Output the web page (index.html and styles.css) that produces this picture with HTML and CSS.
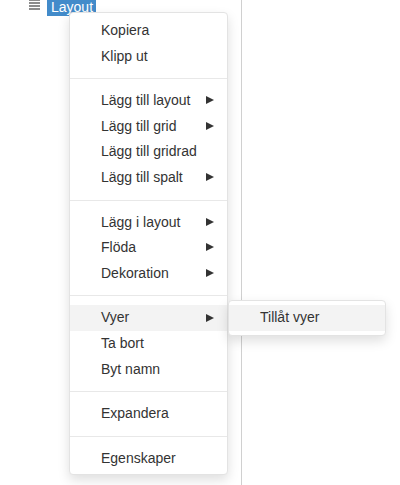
FILE: index.html
```html
<!DOCTYPE html>
<html>
<head>
<meta charset="utf-8">
<link rel="stylesheet" href="styles.css">
</head>
<body>
<div class="page">
  <div class="tree-panel">
    <div class="tree-row">
      <svg class="tree-icon" width="11" height="12" viewBox="0 0 11 12">
        <rect x="0" y="0" width="11" height="2" fill="#8c8c8c"/>
        <rect x="0" y="3" width="11" height="2" fill="#8c8c8c"/>
        <rect x="0" y="6" width="11" height="2" fill="#8c8c8c"/>
        <rect x="0" y="9" width="11" height="2" fill="#8c8c8c"/>
      </svg>
      <span class="tree-label">Layout</span>
    </div>
  </div>
  <div class="canvas"></div>

  <ul class="menu context-menu">
    <li class="item">Kopiera</li>
    <li class="item">Klipp ut</li>
    <li class="sep"></li>
    <li class="item sub">Lägg till layout<span class="arrow"></span></li>
    <li class="item sub">Lägg till grid<span class="arrow"></span></li>
    <li class="item">Lägg till gridrad</li>
    <li class="item sub">Lägg till spalt<span class="arrow"></span></li>
    <li class="sep"></li>
    <li class="item sub">Lägg i layout<span class="arrow"></span></li>
    <li class="item sub">Flöda<span class="arrow"></span></li>
    <li class="item sub">Dekoration<span class="arrow"></span></li>
    <li class="sep"></li>
    <li class="item sub hover">Vyer<span class="arrow"></span></li>
    <li class="item">Ta bort</li>
    <li class="item">Byt namn</li>
    <li class="sep"></li>
    <li class="item">Expandera</li>
    <li class="sep"></li>
    <li class="item">Egenskaper</li>
  </ul>

  <ul class="menu submenu">
    <li class="item hover">Tillåt vyer</li>
  </ul>
</div>
</body>
</html>
```

FILE: styles.css
```css
html, body {
  margin: 0;
  padding: 0;
  background: #fff;
}

body {
  font-family: "Liberation Sans", Arial, sans-serif;
  font-size: 14px;
  color: #333;
  overflow: hidden;
}

.page {
  position: relative;
  display: flex;
  width: 400px;
  height: 485px;
}

.tree-panel {
  width: 241px;
  height: 485px;
  border-right: 1px solid #d0d0d0;
  flex: none;
}

.canvas {
  flex: 1;
}

.tree-row {
  display: flex;
  align-items: flex-start;
  padding-left: 29px;
}

.tree-icon {
  margin-top: -1px;
  flex: none;
}

.tree-label {
  display: inline-block;
  margin-left: 7px;
  margin-top: -2px;
  height: 18px;
  line-height: 18px;
  padding: 0 3px 0 4px;
  background: #428bca;
  color: #fff;
  font-size: 14px;
}

.menu {
  position: absolute;
  list-style: none;
  margin: 0;
  padding: 5px 0 3px;
  background: #fff;
  border: 1px solid #e3e3e3;
  border-radius: 4px;
  box-shadow: 0 5px 12px rgba(0, 0, 0, 0.13);
}

.context-menu {
  left: 69px;
  top: 12px;
  width: 157px;
}

.submenu {
  left: 228px;
  top: 300px;
  width: 156px;
  padding: 4px 0;
}

.item {
  position: relative;
  padding: 3px 20px 3px 31px;
  line-height: 19.6px;
  white-space: nowrap;
}

.item.hover {
  background: #f3f3f3;
}

.sep {
  height: 1px;
  margin: 9px 0;
  background: #e8e8e8;
}

.arrow {
  position: absolute;
  right: 13px;
  top: 50%;
  margin-top: -4.5px;
  width: 0;
  height: 0;
  border-top: 4.5px solid transparent;
  border-bottom: 4.5px solid transparent;
  border-left: 8px solid #333;
}
```
